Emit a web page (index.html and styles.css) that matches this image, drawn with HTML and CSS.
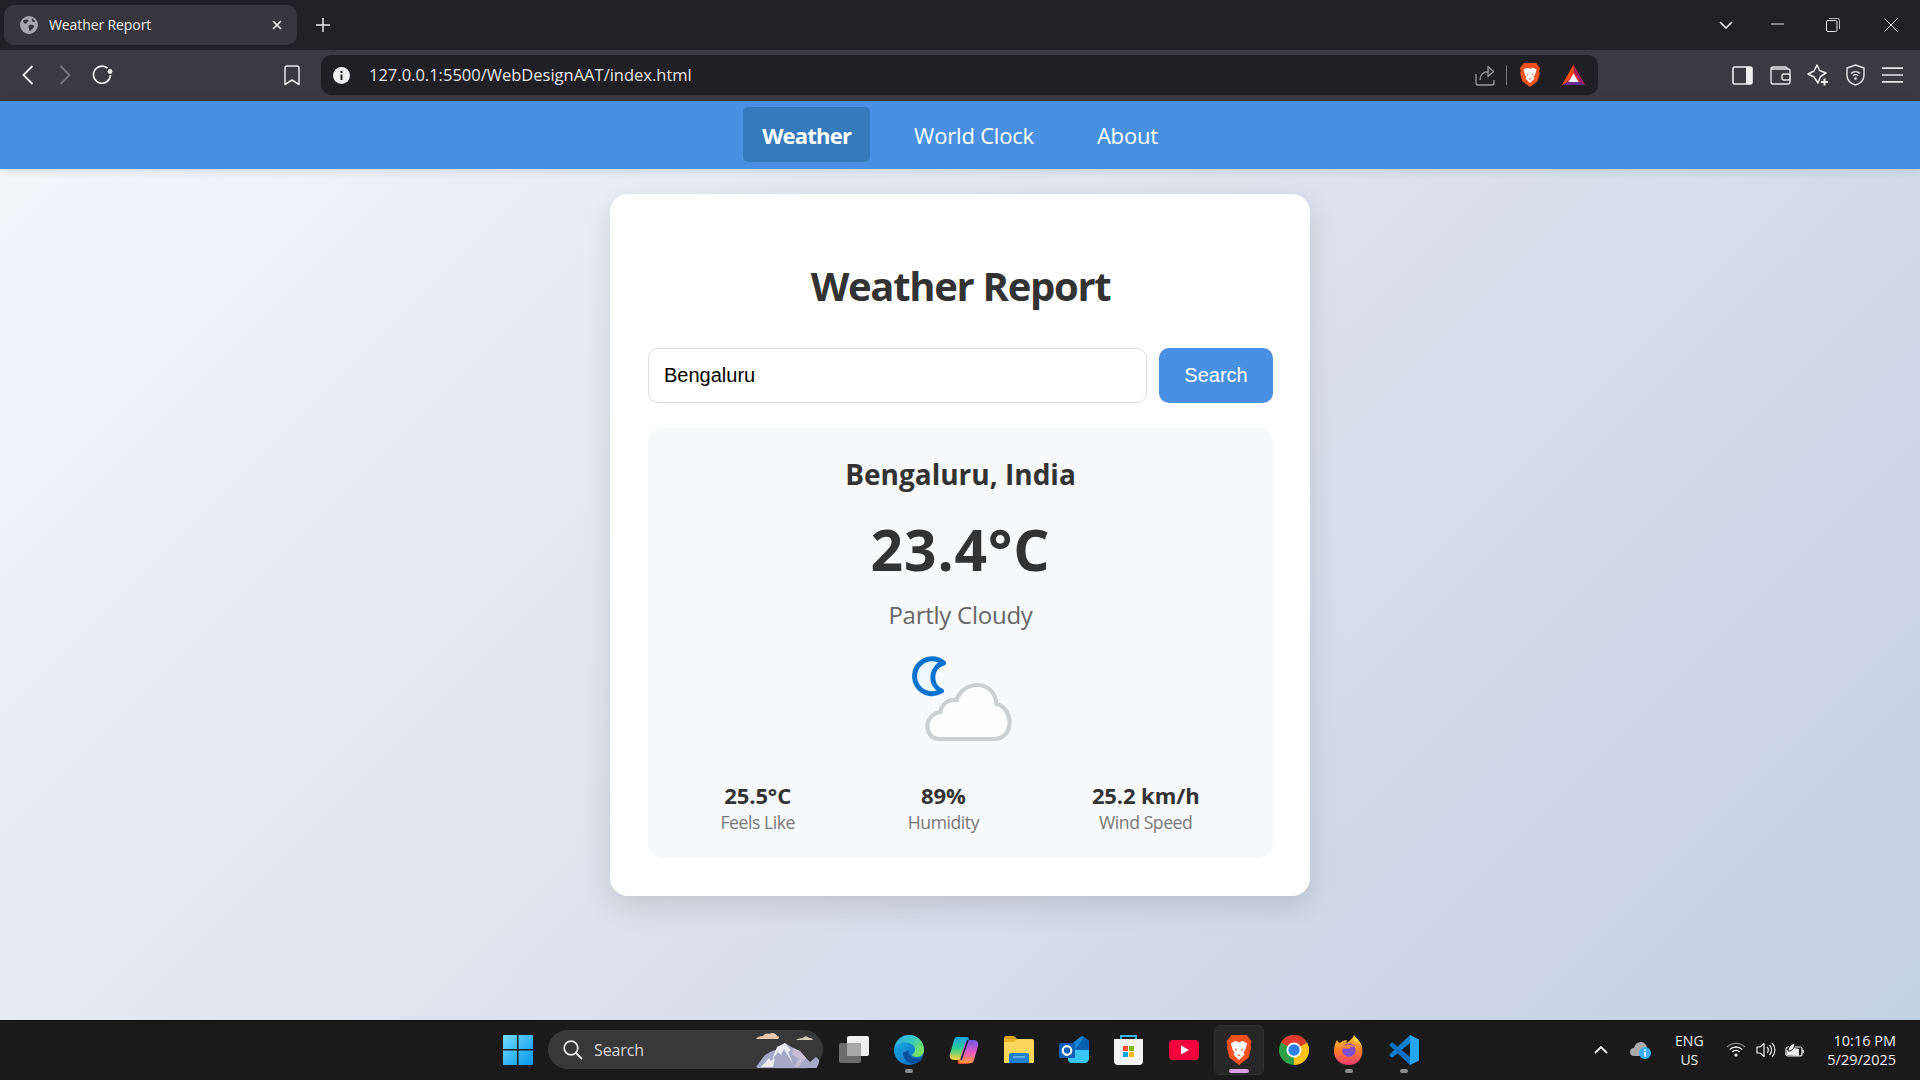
FILE: index.html
```html
<!DOCTYPE html>
<html lang="en">
<head>
<meta charset="utf-8">
<title>Weather Report</title>
<link rel="stylesheet" href="styles.css">
</head>
<body>
<div class="screen">
  <header class="titlebar">
    <div class="tab">
      <svg class="tab-globe" width="18" height="18" viewBox="0 0 18 18"><circle cx="9" cy="9" r="9" fill="#a6a6ab"/><path d="M3 4.500c2-.8 3.500-1.500 5-.6 1 .6.4 1.800-.7 2.200-1 .4-.6 1.600-1.800 1.600C4.300 7.700 3.300 6 3 4.500zM9.500 9c1.500-.6 3.800-.2 4.500 1 .6 1-.6 2.200-1.800 3-1 .7-1.300 2.300-2.400 2-1-.4-.5-2-1-3C8.300 11 8.200 9.500 9.500 9zM12 2.500c1.500.6 2.800 2 3.300 3.500-1.200.3-2.600-.1-3.300-1-.4-.7-.4-1.700 0-2.500z" fill="#36363c"/></svg>
      <span class="tab-title">Weather Report</span>
      <svg class="tab-close" width="10" height="10" viewBox="0 0 10 10"><path d="M1 1l8 8M9 1l-8 8" stroke="#f1f1f1" stroke-width="1.700"/></svg>
    </div>
    <svg class="new-tab" width="14" height="14" viewBox="0 0 14 14"><path d="M7 0v14M0 7h14" stroke="#e8e8e8" stroke-width="1.500"/></svg>
    <div class="window-controls">
      <svg class="wc-tabs" width="14" height="8" viewBox="0 0 14 8"><path d="M1 1l6 6 6-6" fill="none" stroke="#f0f0f0" stroke-width="1.700"/></svg>
      <svg class="wc-min" width="14" height="2" viewBox="0 0 14 2"><path d="M0 1h13" stroke="#e6e6e6" stroke-width="1"/></svg>
      <svg class="wc-max" width="14" height="14" viewBox="0 0 14 14"><rect x=".5" y="2.500" width="10.500" height="11" rx="1.500" fill="none" stroke="#e6e6e6"/><path d="M3 .5h8.500a2 2 0 0 1 2 2V11" fill="none" stroke="#e6e6e6" stroke-width=".8"/></svg>
      <svg class="wc-close" width="14" height="14" viewBox="0 0 14 14"><path d="M.5.5l13 13M13.500.5l-13 13" stroke="#e6e6e6" stroke-width="1"/></svg>
    </div>
  </header>

  <div class="toolbar">
    <svg class="tb-back" width="12" height="20" viewBox="0 0 12 20"><path d="M10.500 1L1.500 10l9 9" fill="none" stroke="#f2f2f2" stroke-width="1.800"/></svg>
    <svg class="tb-forward" width="12" height="20" viewBox="0 0 12 20"><path d="M1.500 1l9 9-9 9" fill="none" stroke="#77777c" stroke-width="1.800"/></svg>
    <svg class="tb-reload" width="22" height="20" viewBox="0 0 22 20"><path d="M15.500 3.200A8.500 8.500 0 1 0 18.500 10" fill="none" stroke="#f2f2f2" stroke-width="1.600"/><circle cx="18" cy="6.500" r="2.400" fill="#f2f2f2"/></svg>
    <svg class="tb-bookmark" width="16" height="21" viewBox="0 0 16 21"><path d="M1 3a2 2 0 0 1 2-2h10a2 2 0 0 1 2 2v16.500l-7-4.500-7 4.500z" fill="none" stroke="#e8e8e8" stroke-width="1.500" stroke-linejoin="round"/></svg>
    <div class="urlbar">
      <svg class="url-info" width="17" height="17" viewBox="0 0 17 17"><circle cx="8.500" cy="8.500" r="8.500" fill="#efefef"/><rect x="7.500" y="7.500" width="2" height="5.500" fill="#202024"/><rect x="7.500" y="4" width="2" height="2" fill="#202024"/></svg>
      <span class="url-text">127.0.0.1:5500/WebDesignAAT/index.html</span>
      <svg class="url-share" width="20" height="21" viewBox="0 0 20 21"><path d="M1 9v9a2 2 0 0 0 2 2h14a2 2 0 0 0 2-2v-3" fill="none" stroke="#9a9a9e" stroke-width="1.300"/><path d="M5 15c0-5 3-8.500 9-8.500M13 1.500l5.500 5-5.500 5z" fill="none" stroke="#9a9a9e" stroke-width="1.300" stroke-linejoin="round"/></svg>
      <span class="url-divider"></span>
      <svg class="url-brave" width="20" height="24" viewBox="0 0 20 24"><path d="M3.800 0h12.400l1.600 2.200L20 5l-.8 3.200.6 2-2.200 8L10 24l-7.600-5.800-2.200-8 .6-2L0 5l2.200-2.800z" fill="#f4511e"/><path d="M3.500 6.500L7 4.800l3 1 3-1 3.500 1.700L15 12l-1.500 2 1 1.500L10 20l-4.500-4.500 1-1.500L5 12z" fill="#fff"/><path d="M6.500 10.500l2 1-1 1zM13.500 10.500l-2 1 1 1zM8.500 15.500h3L10 17z" fill="#f4511e"/></svg>
      <svg class="url-bat" width="23" height="20" viewBox="0 0 23 20"><path d="M11.500 0L23 20H0z" fill="#e8352b"/><path d="M11.500 0L23 20l-5-3.200L11.500 6z" fill="#9e1f63"/><path d="M0 20l5-3.200h13l5 3.200z" fill="#662d91"/><path d="M11.500 8.500L16.500 17h-10z" fill="#fff"/><path d="M0 20L11.500 0v6L5 16.800z" fill="#ff5000"/></svg>
    </div>
    <svg class="tb-side" width="21" height="19" viewBox="0 0 21 19"><rect x="1" y="1" width="19" height="17" rx="1.500" fill="none" stroke="#f0f0f0" stroke-width="1.600"/><rect x="14" y="1" width="6" height="17" fill="#f0f0f0"/></svg>
    <svg class="tb-wallet" width="21" height="19" viewBox="0 0 21 19"><path d="M17 3V2.500A1.500 1.500 0 0 0 15.500 1H3a2 2 0 0 0-2 2v13a2 2 0 0 0 2 2h15a2 2 0 0 0 2-2V5a2 2 0 0 0-2-2H1.500" fill="none" stroke="#e8e8e8" stroke-width="1.400"/><rect x="12" y="8" width="8" height="6" rx="2" fill="#3a3a40" stroke="#e8e8e8" stroke-width="1.400"/></svg>
    <svg class="tb-leo" width="22" height="22" viewBox="0 0 22 22"><path d="M10 1l2.500 5.500L19 9l-5.500 3.500L11 19 7 13 1 10l6-3z" fill="none" stroke="#eeeeee" stroke-width="1.500" stroke-linejoin="round"/><path d="M17.500 14.500v7M14 18h7" stroke="#eeeeee" stroke-width="2"/></svg>
    <svg class="tb-vpn" width="19" height="22" viewBox="0 0 19 22"><path d="M9.500 1L18 4v7c0 5-3.500 8.500-8.500 10C4.500 19.500 1 16 1 11V4z" fill="none" stroke="#e8e8e8" stroke-width="1.400"/><path d="M5 9.500a6.500 6.500 0 0 1 9 0M6.800 11.800a4 4 0 0 1 5.400 0" fill="none" stroke="#e8e8e8" stroke-width="1.300"/><circle cx="9.500" cy="14.500" r="1.200" fill="#e8e8e8"/></svg>
    <svg class="tb-menu" width="21" height="16" viewBox="0 0 21 16"><path d="M0 1.200h21M0 8h21M0 14.800h21" stroke="#e6e6e6" stroke-width="1.700"/></svg>
  </div>

  <div class="page">
    <nav class="nav">
      <a class="nav-item active">Weather</a>
      <a class="nav-item">World Clock</a>
      <a class="nav-item">About</a>
    </nav>
    <main class="card">
      <h1 class="title">Weather Report</h1>
      <div class="search">
        <div class="search-input">Bengaluru</div>
        <div class="search-btn">Search</div>
      </div>
      <section class="panel">
        <h2 class="city">Bengaluru, India</h2>
        <div class="temp">23.4°C</div>
        <div class="desc">Partly Cloudy</div>
        <svg class="weather-icon" width="104" height="100" viewBox="0 0 104 100">
          <g transform="translate(1.500 0)">
            <path d="M33 13A17.500 17.500 0 1 0 31 41A15 15 0 0 1 33 13z" fill="#eef8ff" stroke="#0a72cf" stroke-width="5" stroke-linejoin="round"/>
            <path d="M29 89C20 89 17 82 17 76C17 68 23 63 30 62C31 54 38 49 46 50C49 41 57 35 67 35C78 35 85 43 86 54C94 56 99 64 99 72C99 82 93 89 84 89z" fill="#fdfdfd" stroke="#cdd0d2" stroke-width="4.200"/>
          </g>
        </svg>
        <div class="stats">
          <div class="stat"><div class="stat-value">25.5°C</div><div class="stat-label">Feels Like</div></div>
          <div class="stat"><div class="stat-value">89%</div><div class="stat-label">Humidity</div></div>
          <div class="stat"><div class="stat-value">25.2 km/h</div><div class="stat-label">Wind Speed</div></div>
        </div>
      </section>
    </main>
  </div>

  <footer class="taskbar">
    <div class="task-center">
      <div class="slot"><svg width="30" height="30" viewBox="0 0 30 30"><defs><linearGradient id="win" x1="0" y1="0" x2="1" y2="1"><stop offset="0" stop-color="#6fdcff"/><stop offset="1" stop-color="#0a96ea"/></linearGradient></defs><path d="M0 1a1 1 0 0 1 1-1h13v14H0zM15.500 0H29a1 1 0 0 1 1 1v13H15.500zM0 15.500h14V30H1a1 1 0 0 1-1-1zM15.500 15.500H30V29a1 1 0 0 1-1 1H15.500z" fill="url(#win)"/></svg></div>
      <div class="task-search">
        <svg class="ts-icon" width="20" height="20" viewBox="0 0 20 20"><circle cx="8" cy="8" r="6.800" fill="none" stroke="#e8e8e8" stroke-width="1.700"/><path d="M13 13l6 6" stroke="#e8e8e8" stroke-width="1.900"/></svg>
        <span class="ts-text">Search</span>
        <svg class="ts-art" width="64" height="38" viewBox="0 0 64 38"><path d="M1 37L10 25l7-4 8-2 5-6 8 5 7 3 6 7 4 4 6-5 4 4-4 8-2 1H8z" fill="#a6a8c8"/><path d="M30 13l6 7-3 2 5 12-9-15-3 6-3-3-6 8 5-13 4-2zM6 37l8-9 2 3 4-3-2 9z" fill="#ecebf2"/><path d="M38 18l7 3 6 7-8 9h-4l5-8-7-5z" fill="#c8bed8"/><path d="M1 9h22c2-1 1-3-1-3-1-3-5-4-8-2-2-1-5 0-6 2-3 0-6 1-7 3z" fill="#e8c8ae"/><path d="M41 10h17c-1-2-3-2-4-2-1-2-5-2-6 0-3 0-6 1-7 2z" fill="#d7ccc0"/></svg>
      </div>
      <div class="slot slot-view"><svg width="30" height="28" viewBox="0 0 30 28"><rect y="7" width="22" height="20" rx="2" fill="#6c6c6c"/><rect x="8" width="22" height="20" rx="2" fill="#f0f0f0"/><rect x="8" y="7" width="14" height="13" fill="#a8a8a8"/></svg></div>
      <div class="slot"><svg width="30" height="30" viewBox="0 0 30 30"><defs><linearGradient id="edg" x1="0" y1="0" x2="1" y2="1"><stop offset="0" stop-color="#1cb0ea"/><stop offset="1" stop-color="#0b62b8"/></linearGradient><linearGradient id="edg2" x1="0" y1="0" x2="1" y2=".6"><stop offset="0" stop-color="#2aa8e8"/><stop offset=".55" stop-color="#35c9c0"/><stop offset="1" stop-color="#7ee35c"/></linearGradient></defs><circle cx="15" cy="15" r="15" fill="url(#edg)"/><path d="M9 18c0 6 5 10.500 11 10.500 3.500 0 7-2.500 9-6-3 1.500-8 1.500-11-.5-2.500-1.500-4-4-3.500-7z" fill="#0b4f9e"/><path d="M1 12C3 4 9 0 15 0c8.500 0 15 6.500 15 15 0 4-3 7-7 7-2.500 0-4.500-.7-5.500-2.200 2.200-.8 3.500-2.800 3.500-5.300 0-4-4-7-9-7-4 0-9 1.500-11 4.500z" fill="url(#edg2)"/></svg><span class="dot"></span></div>
      <div class="slot"><svg width="30" height="28" viewBox="0 0 30 28"><defs><linearGradient id="cp1" x1="0" y1="0" x2="0" y2="1"><stop offset="0" stop-color="#1a9fe6"/><stop offset=".5" stop-color="#2fcf8e"/><stop offset="1" stop-color="#ffd338"/></linearGradient><linearGradient id="cp2" x1="0" y1="0" x2="0" y2="1"><stop offset="0" stop-color="#6a5ae8"/><stop offset=".55" stop-color="#e85bc0"/><stop offset="1" stop-color="#ff9a3a"/></linearGradient></defs><path d="M9 24h10c2 0 3 1 3 2s-2 2-4 2h-7c-2 0-3-1-2-4z" fill="#f0462e"/><path d="M8 1h10c2 0 2 2 1.500 3L14 21c-.6 2-2 3-4 3H5c-3.500 0-5-3-4-6L5 4c.5-2 1.500-3 3-3z" fill="url(#cp1)"/><path d="M22 27H12c-2 0-2-2-1.500-3L16 7c.6-2 2-3 4-3h5c3.500 0 5 3 4 6l-4 14c-.5 2-1.500 3-3 3z" fill="url(#cp2)"/><path d="M19 4l-7 20" stroke="#16203a" stroke-width="1.600"/></svg></div>
      <div class="slot"><svg width="30" height="28" viewBox="0 0 30 28"><path d="M0 2a2 2 0 0 1 2-2h8l3 3h-13z" fill="#d8a218"/><path d="M0 3h28a2 2 0 0 1 2 2v21a1 1 0 0 1-1 1H1a1 1 0 0 1-1-1z" fill="#fbd65a"/><path d="M0 3h13l-3 3H0z" fill="#e8b52a"/><path d="M5 19a2 2 0 0 1 2-2h16a2 2 0 0 1 2 2v8H5z" fill="#1e80cf"/><path d="M9 21h12" stroke="#7ec4f4" stroke-width="1.400"/></svg></div>
      <div class="slot"><svg width="30" height="30" viewBox="0 0 30 30"><path d="M8 13l13-11c1-1 3-1 4 0l5 4v16c0 3-2 5-5 5H13c-3 0-4-2-4-4z" fill="#1682d4"/><path d="M25 2l5 4v11H15z" fill="#0a5fb0"/><path d="M9 15h21v8c0 3-2 5-5 5H13c-3 0-4-2-4-4z" fill="#38c6f4"/><rect y="8" width="16" height="15" rx="1.500" fill="#0e5fb4"/><circle cx="8" cy="15.500" r="4.300" fill="none" stroke="#fff" stroke-width="2.200"/></svg></div>
      <div class="slot"><svg width="29" height="30" viewBox="0 0 29 30"><path d="M7 4V1h15v3" fill="none" stroke="#30b4e4" stroke-width="2"/><path d="M0 4h29v22a4 4 0 0 1-4 4H4a4 4 0 0 1-4-4z" fill="#f4f4f4"/><rect x="9" y="11" width="5" height="5" fill="#f25022"/><rect x="15" y="11" width="5" height="5" fill="#7fba00"/><rect x="9" y="17" width="5" height="5" fill="#00a4ef"/><rect x="15" y="17" width="5" height="5" fill="#ffb900"/></svg></div>
      <div class="slot"><svg width="30" height="20" viewBox="0 0 30 20"><rect width="30" height="20" rx="4" fill="#f5003c"/><path d="M12 5.500v9l8-4.500z" fill="#fff"/></svg></div>
      <div class="slot slot-active"><svg width="26" height="30" viewBox="0 0 20 24"><path d="M3.800 0h12.400l1.600 2.200L20 5l-.8 3.200.6 2-2.200 8L10 24l-7.600-5.800-2.200-8 .6-2L0 5l2.200-2.800z" fill="#f4511e"/><path d="M3.500 6.500L7 4.800l3 1 3-1 3.500 1.700L15 12l-1.500 2 1 1.500L10 20l-4.500-4.500 1-1.500L5 12z" fill="#fff"/><path d="M6.500 10.500l2 1-1 1zM13.500 10.500l-2 1 1 1zM8.500 15.500h3L10 17z" fill="#f4511e"/></svg><span class="dot dot-active"></span></div>
      <div class="slot"><svg width="30" height="30" viewBox="0 0 30 30"><circle cx="15" cy="15" r="15" fill="#2e9e47"/><path d="M15 15L28 7.500A15 15 0 0 1 15 30z" fill="#fbc116"/><path d="M15 15L2 7.500A15 15 0 0 1 28 7.500z" fill="#e33b2e"/><circle cx="15" cy="15" r="7.500" fill="#fff"/><circle cx="15" cy="15" r="5.700" fill="#2d7fe8"/></svg></div>
      <div class="slot"><svg width="29" height="30" viewBox="0 0 29 30"><defs><linearGradient id="ff" x1=".5" y1="0" x2=".5" y2="1"><stop offset="0" stop-color="#ffc92e"/><stop offset=".55" stop-color="#ff7a2e"/><stop offset="1" stop-color="#e8386e"/></linearGradient></defs><path d="M3 5c1 2 2 3 3 3 2-2 5-3 7-3l-1 3c3-1 7-5 8-8 1 3 6 5 8 12 2 9-3 18-13.500 18C6 30 0 24 0 16c0-4 1-8 3-11z" fill="url(#ff)"/><path d="M20 0c1 3 6 5 8 12-2-4-5-6-8-6z" fill="#ffd84a"/><circle cx="15" cy="15" r="6.800" fill="#7d4fd0"/><path d="M7.500 13c3-4.500 11-4.500 13-.5-3-1-4-1-5 1-3 0-6 0-8-.5z" fill="#ff8b34"/></svg><span class="dot"></span></div>
      <div class="slot"><svg width="30" height="30" viewBox="0 0 30 30"><path d="M21 0v8L3.200 22.700 0 20z" fill="#0e80d2"/><path d="M0 10l3.200-2.700L21 22v8z" fill="#0a74c4"/><path d="M21 0l9 4.500v21L21 30z" fill="#22a6f0"/></svg><span class="dot"></span></div>
    </div>
    <div class="tray">
      <svg class="tray-chev" width="14" height="8" viewBox="0 0 14 8"><path d="M1 7l6-6 6 6" fill="none" stroke="#eee" stroke-width="1.800"/></svg>
      <svg class="tray-cloud" width="22" height="20" viewBox="0 0 22 20"><path d="M4 16a4 4 0 0 1 0-8c1-4 4-6 7-6 3 0 5 2 6 5l-4 9z" fill="#a9a9a9"/><circle cx="15" cy="13" r="6" fill="#3daef2"/><rect x="14.200" y="12" width="1.600" height="4.500" fill="#fff"/><rect x="14.200" y="9.500" width="1.600" height="1.500" fill="#fff"/></svg>
      <div class="tray-lang"><span>ENG</span><span>US</span></div>
      <svg class="tray-wifi" width="20" height="15" viewBox="0 0 20 15"><path d="M1 5a13 13 0 0 1 18 0" fill="none" stroke="#8a8a8a" stroke-width="1.300"/><path d="M3.800 7.500a9 9 0 0 1 12.400 0M6.500 10a5 5 0 0 1 7 0" fill="none" stroke="#f0f0f0" stroke-width="1.400"/><circle cx="10" cy="13" r="1.600" fill="#f0f0f0"/></svg>
      <svg class="tray-vol" width="20" height="16" viewBox="0 0 20 16"><path d="M1 5h3l4-3.500v13L4 11H1z" fill="none" stroke="#f0f0f0" stroke-width="1.200" stroke-linejoin="round"/><path d="M11 5a4 4 0 0 1 0 6M13.500 3a7 7 0 0 1 0 10M16 1a10 10 0 0 1 0 14" fill="none" stroke="#f0f0f0" stroke-width="1.200"/></svg>
      <svg class="tray-bat" width="20" height="16" viewBox="0 0 20 16"><rect x="1" y="5" width="16" height="9" rx="2" fill="none" stroke="#f0f0f0" stroke-width="1.200"/><path d="M18 8v3" stroke="#f0f0f0" stroke-width="1.500"/><path d="M2 13V8l7-2 5 1v7z" fill="#f0f0f0"/><path d="M3 9c0-4 3-7 7-8 0 4-2 7-5 8z" fill="#f0f0f0" stroke="#1a1a1a" stroke-width="1"/></svg>
      <div class="tray-clock"><span>10:16 PM</span><span>5/29/2025</span></div>
    </div>
  </footer>
</div>
</body>
</html>
```
FILE: styles.css
```css
* { box-sizing: border-box; }
html, body { margin: 0; height: 100%; overflow: hidden; }
body { font-family: "Open Sans", "Noto Sans", sans-serif; }
.screen { width: 1920px; height: 1080px; display: flex; flex-direction: column; }

.titlebar { height: 50px; background: #202025; display: flex; align-items: center; padding-left: 4px; flex: none; }
.tab { width: 293px; height: 40px; background: #36363c; border-radius: 10px; display: flex; align-items: center; padding-left: 16px; color: #f0f0f0; }
.tab-title { margin: -2px 0 0 11px; font-size: 14px; flex: 1; letter-spacing: -.1px; }
.tab-close { margin-right: 15px; }
.new-tab { margin-left: 19px; }
.window-controls { margin-left: auto; display: flex; align-items: center; height: 100%; }
.wc-tabs { margin-right: 38px; }
.wc-min { margin-right: 41px; margin-top: -3px; }
.wc-max { margin-right: 44px; }
.wc-close { margin-right: 22px; }

.toolbar { height: 51px; background: #3a3a40; display: flex; align-items: center; flex: none; padding-bottom: 1px; }
.tb-back { margin-left: 22px; }
.tb-forward { margin-left: 25px; }
.tb-reload { margin-left: 21px; }
.tb-bookmark { margin-left: 170px; }
.urlbar { margin-left: 21px; width: 1277px; height: 40px; background: #202024; border-radius: 10px; display: flex; align-items: center; padding-left: 12px; }
.url-text { margin-left: 19px; font-size: 16.500px; color: #e6e6e6; flex: 1; margin-top: -2px; }
.url-divider { width: 1px; height: 20px; background: #77777c; margin-left: 11px; }
.url-brave { margin-left: 13px; }
.url-bat { margin-left: 22px; margin-right: 13px; }
.tb-side { margin-left: 134px; }
.tb-wallet { margin-left: 17px; }
.tb-leo { margin-left: 16px; }
.tb-vpn { margin-left: 17px; }
.tb-menu { margin-left: 17px; }

.page { flex: 1; background: linear-gradient(135deg, #f5f7fa 0%, #c3cfe2 100%); display: flex; flex-direction: column; align-items: center; min-height: 0; }
.nav { width: 100%; height: 68px; background: #4a90e2; box-shadow: 0 2px 10px rgba(0,0,0,.1); display: flex; justify-content: center; align-items: center; gap: 25px; padding-bottom: 1px; flex: none; }
.nav-item { color: #fff; font-size: 22px; height: 55px; line-height: 56px; padding: 0 19px; border-radius: 5px; letter-spacing: -.2px; }
.nav-item.active { background: #357abd; font-weight: 700; letter-spacing: -.8px; }

.card { width: 700px; margin-top: 25px; background: #fff; border-radius: 18px; box-shadow: 0 10px 30px rgba(0,0,0,.12); padding: 38px 37px 38px 38px; }
.title { margin: 30px 0 38px; height: 48px; line-height: 48px; text-align: center; font-size: 40px; font-weight: 700; color: #333; letter-spacing: -1.300px; }
.search { display: flex; gap: 12px; height: 55px; margin-bottom: 25px; }
.search-input { flex: 1; border: 1px solid #ddd; border-radius: 10px; padding-left: 15px; line-height: 53px; font-family: "Liberation Sans", Arial, sans-serif; font-size: 20px; color: #000; }
.search-btn { width: 114px; background: #4a90e2; border-radius: 10px; color: #fff; text-align: center; line-height: 54px; font-family: "Liberation Sans", Arial, sans-serif; font-size: 20px; }
.panel { height: 430px; background: #f8f9fa; border-radius: 15px; padding: 27px 17px 0 16px; text-align: center; }
.city { margin: 0 -.5px 0 .5px; font-size: 28px; line-height: 38px; font-weight: 700; color: #333; }
.temp { margin: 18px -.5px 0 .5px; font-size: 57px; line-height: 76px; font-weight: 700; color: #333; letter-spacing: .9px; }
.desc { margin: 12px -.5px 0 .5px; font-size: 24px; line-height: 32px; color: #666; letter-spacing: -.25px; }
.weather-icon { display: block; margin: 19px auto 0; position: relative; left: .5px; filter: blur(.7px); }
.stats { display: flex; justify-content: space-around; margin-top: 30px; }
.stat-value { font-size: 22px; line-height: 30px; font-weight: 700; color: #333; letter-spacing: -.1px; }
.stat-label { font-size: 17.600px; line-height: 24px; color: #777; letter-spacing: -.45px; }

.taskbar { height: 60px; background: #1a1a1a; border-top: 1px solid #111; flex: none; position: relative; display: flex; align-items: center; justify-content: flex-end; }
.task-center { position: absolute; left: 490px; top: 0; height: 100%; padding-bottom: 2px; display: flex; align-items: center; }
.slot { width: 55px; height: 50px; display: flex; align-items: center; justify-content: center; position: relative; border-radius: 6px; border: 1px solid transparent; }
.slot-view { margin-left: 3px; }
.slot-active { width: 50px; margin: 0 2.500px; background: #272727; border-color: #303030; }
.dot { position: absolute; bottom: 1px; left: 50%; width: 8px; height: 4px; margin-left: -4px; border-radius: 2px; background: #8e8e8e; }
.dot-active { width: 20px; margin-left: -10px; background: #d9a0e6; }
.task-search { width: 275px; height: 39px; margin-left: 3px; background: #383838; border-radius: 20px; display: flex; align-items: center; padding-left: 15px; position: relative; color: #d8d8d8; }
.ts-text { margin-left: 11px; font-size: 16px; letter-spacing: -.1px; }
.ts-art { position: absolute; right: 4px; bottom: 1px; }
.tray { display: flex; align-items: center; color: #eee; font-size: 14.500px; padding: 0 24px 2px 0; }
.tray-chev { margin-right: 22px; }
.tray-cloud { margin-right: 13px; }
.tray-lang { width: 48px; display: flex; flex-direction: column; align-items: center; line-height: 19px; margin-right: 13px; font-size: 14px; }
.tray-wifi { margin-right: 10px; }
.tray-vol { margin-right: 9px; }
.tray-bat { margin-right: 22px; }
.tray-clock { display: flex; flex-direction: column; align-items: flex-end; line-height: 19px; }
```
